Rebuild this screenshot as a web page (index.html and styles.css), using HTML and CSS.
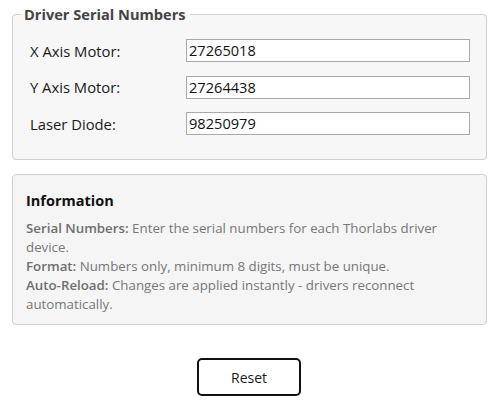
FILE: index.html
```html
<!DOCTYPE html>
<html>
<head>
<meta charset="utf-8">
<link rel="stylesheet" href="styles.css">
</head>
<body>
<div class="page">
  <fieldset class="group">
    <legend class="group-title">Driver Serial Numbers</legend>
    <div class="form-grid">
      <label class="lbl">X Axis Motor:</label>
      <div class="field">27265018</div>
      <label class="lbl">Y Axis Motor:</label>
      <div class="field">27264438</div>
      <label class="lbl">Laser Diode:</label>
      <div class="field">98250979</div>
    </div>
  </fieldset>

  <section class="info">
    <h3 class="info-title">Information</h3>
    <p class="info-text"><b>Serial Numbers:</b> Enter the serial numbers for each Thorlabs driver device.<br><b>Format:</b> Numbers only, minimum 8 digits, must be unique.<br><b>Auto-Reload:</b> Changes are applied instantly - drivers reconnect automatically.</p>
  </section>

  <div class="actions">
    <button class="btn">Reset</button>
  </div>
</div>
</body>
</html>
```

FILE: styles.css
```css
* { box-sizing: border-box; }
html, body { margin: 0; padding: 0; background: #ffffff; }
body {
  font-family: "Open Sans", "Noto Sans", sans-serif;
  color: #1a1a1a;
  width: 498px;
  height: 419px;
  overflow: hidden;
}
.page { padding: 7px 11px 0 12px; }

.group {
  margin: 0;
  border: 1px solid #d0d0d0;
  border-radius: 4px;
  background: #f7f7f7;
  padding: 18px 16px 24px 17px;
  min-width: 0;
}
.group-title {
  font-weight: 700;
  font-size: 14.6px;
  color: #444444;
  padding: 0 4px 0 3px;
  margin-left: -9px;
  line-height: 14px;
}

.form-grid {
  display: grid;
  grid-template-columns: 156px 1fr;
  row-gap: 13.5px;
  align-items: center;
}
.lbl {
  font-size: 14.8px;
  color: #1a1a1a;
}
.field {
  height: 23px;
  background: #ffffff;
  border: 1px solid #a9a9a9;
  font-size: 14.6px;
  line-height: 21px;
  padding-left: 2px;
  color: #111;
}

.info {
  margin-top: 14px;
  border: 1px solid #d0d0d0;
  border-radius: 4px;
  background: #f5f5f5;
  height: 151px;
  padding: 16px 13px 0 13px;
}
.info-title {
  margin: 0 0 8px 0;
  font-size: 14.5px;
  font-weight: 700;
  color: #111;
  line-height: 20px;
}
.info-text {
  margin: 0;
  font-size: 13.3px;
  line-height: 19px;
  color: #777777;
}
.info-text b { font-weight: 600; color: #6e6e6e; }

.actions {
  display: flex;
  justify-content: center;
  padding-top: 33px;
  padding-right: 1px;
}
.btn {
  width: 104px;
  height: 38px;
  border: 2px solid #111;
  border-radius: 5px;
  background: #ffffff;
  font-family: "Open Sans", "Noto Sans", sans-serif;
  font-size: 14px;
  color: #1a1a1a;
}
```
